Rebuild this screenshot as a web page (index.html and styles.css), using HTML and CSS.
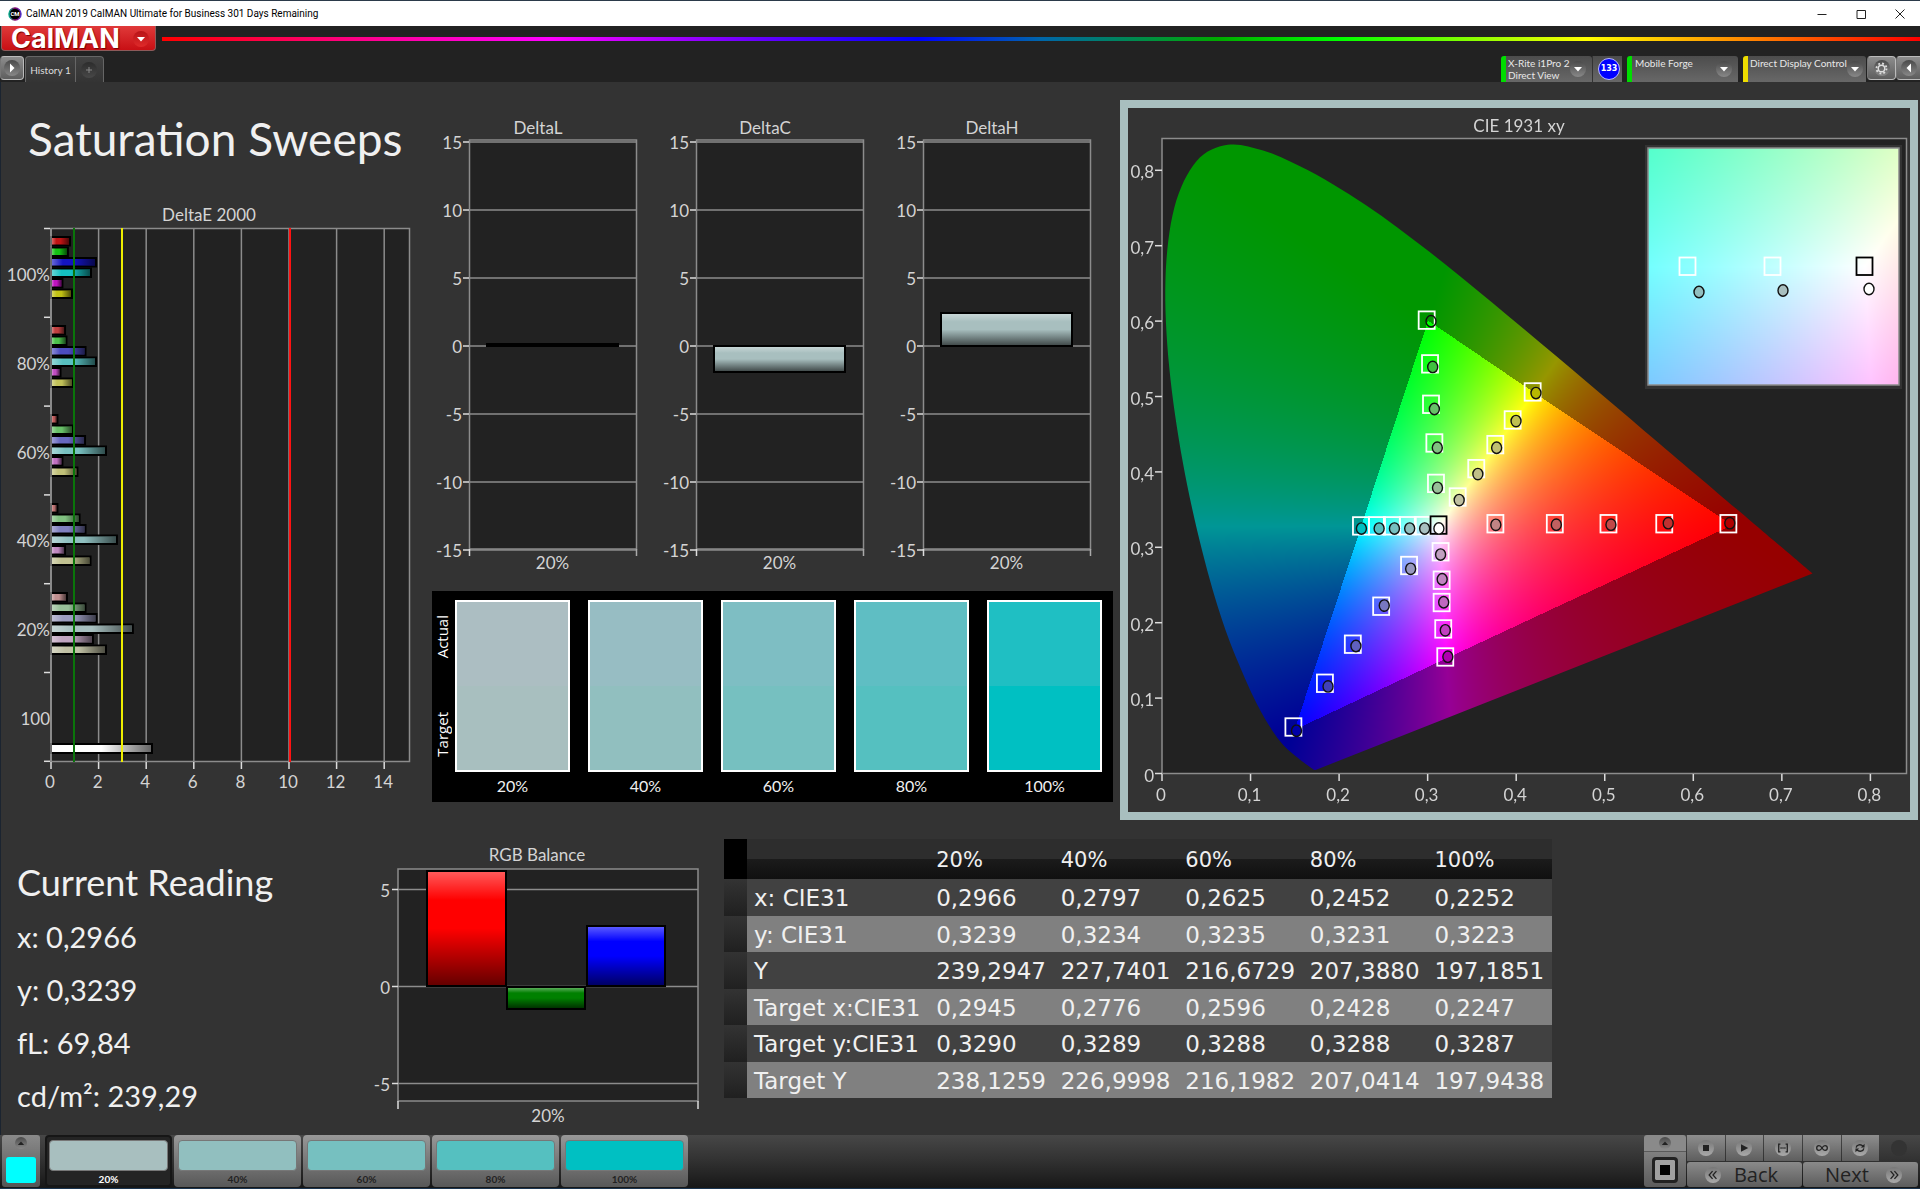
FILE: index.html
```html
<!DOCTYPE html>
<html lang="en">
<head>
<meta charset="utf-8">
<title>CalMAN 2019</title>
<link rel="stylesheet" href="styles.css">
</head>
<body>
<header class="titlebar">
	<svg class="app-icon" viewBox="0 0 14 14"><defs><linearGradient id="ring"><stop offset="0" stop-color="#0a8"/><stop offset="0.5" stop-color="#806"/><stop offset="1" stop-color="#53c"/></linearGradient></defs><circle cx="7" cy="7" r="6" stroke="url(#ring)" stroke-width="1.5"/><text x="7" y="9" text-anchor="middle">CM</text></svg>
	<span class="caption">CalMAN 2019 CalMAN Ultimate for Business 301 Days Remaining</span>
	<button class="win" aria-label="Minimize"><svg viewBox="0 0 12 12"><path d="M1.5 6.5h9"/></svg></button>
	<button class="win" aria-label="Maximize"><svg viewBox="0 0 12 12"><path d="M2 2.500h8.500v8H2z"/></svg></button>
	<button class="win" aria-label="Close"><svg viewBox="0 0 12 12"><path d="M1.500 1.500l9 9M10.500 1.500l-9 9"/></svg></button>
</header>

<div class="brandbar">
	<button class="brand">CalMAN <span class="knob red"><svg viewBox="0 0 10 10"><path d="M1 3h8L5 7.500z"/></svg></span></button>
	<div class="rainbow"></div>
</div>

<nav class="tabbar">
	<button class="square" aria-label="Expand"><span class="knob"><svg viewBox="0 0 10 10"><path d="M3 0.500v9L7.500 5z"/></svg></span></button>
	<div class="tabs">
		<button class="tab">History 1</button>
		<button class="tab add" aria-label="Add tab"><span class="knob dim"><svg viewBox="0 0 10 10"><path d="M4.500 2h1v2.500H8v1H5.500V8h-1V5.500H2v-1h2.500z"/></svg></span></button>
	</div>
	<button class="device meter"><span class="name">X-Rite i1Pro 2<br>Direct View</span><span class="knob"><svg viewBox="0 0 10 10"><path d="M1 3h8L5 7.500z"/></svg></span></button>
	<button class="count"><span>133</span></button>
	<button class="device source"><span class="name">Mobile Forge</span><span class="knob"><svg viewBox="0 0 10 10"><path d="M1 3h8L5 7.500z"/></svg></span></button>
	<button class="device display"><span class="name">Direct Display Control</span><span class="knob"><svg viewBox="0 0 10 10"><path d="M1 3h8L5 7.500z"/></svg></span></button>
	<button class="square gear" aria-label="Settings"><span class="knob"><svg viewBox="0 0 14 14"><circle class="line" cx="7" cy="7" r="3.500"/><circle class="teeth" cx="7" cy="7" r="5.400"/></svg></span></button>
	<button class="square last" aria-label="Collapse"><span class="knob"><svg viewBox="0 0 10 10"><path d="M7 0.500v9L2.500 5z"/></svg></span></button>
</nav>

<main>
	<section class="upper">
		<div class="sweeps">
			<h1>Saturation Sweeps</h1>
			<svg id="deltaE" class="chart" viewBox="0 0 432 600"></svg>
		</div>
		<div class="middle">
			<div class="deltas">
				<svg id="deltaL" class="chart" viewBox="0 0 227 470"></svg>
				<svg id="deltaC" class="chart" viewBox="0 0 227 470"></svg>
				<svg id="deltaH" class="chart" viewBox="0 0 227 470"></svg>
			</div>
			<div class="patches">
				<div class="side"><span>Actual</span><span>Target</span></div>
				<figure><div class="patch p20"></div><figcaption>20%</figcaption></figure>
				<figure><div class="patch p40"></div><figcaption>40%</figcaption></figure>
				<figure><div class="patch p60"></div><figcaption>60%</figcaption></figure>
				<figure><div class="patch p80"></div><figcaption>80%</figcaption></figure>
				<figure><div class="patch p100"></div><figcaption>100%</figcaption></figure>
			</div>
		</div>
		<div class="cie-wrap">
			<div class="cie">
				<canvas id="gamut" width="782" height="704"></canvas>
				<svg id="cie" class="chart" viewBox="0 0 782 704"></svg>
			</div>
		</div>
	</section>

	<section class="lower">
		<div class="reading">
			<h2>Current Reading</h2>
			<p>x: 0,2966</p>
			<p>y: 0,3239</p>
			<p>fL: 69,84</p>
			<p>cd/m²: 239,29</p>
		</div>
		<svg id="rgb" class="chart" viewBox="0 0 364 290"></svg>
		<table>
			<thead>
				<tr><th class="sel"></th><th></th><th>20%</th><th>40%</th><th>60%</th><th>80%</th><th>100%</th></tr>
			</thead>
			<tbody>
				<tr><td class="sel"></td><td>x: CIE31</td><td>0,2966</td><td>0,2797</td><td>0,2625</td><td>0,2452</td><td>0,2252</td></tr>
				<tr><td class="sel"></td><td>y: CIE31</td><td>0,3239</td><td>0,3234</td><td>0,3235</td><td>0,3231</td><td>0,3223</td></tr>
				<tr><td class="sel"></td><td>Y</td><td>239,2947</td><td>227,7401</td><td>216,6729</td><td>207,3880</td><td>197,1851</td></tr>
				<tr><td class="sel"></td><td>Target x:CIE31</td><td>0,2945</td><td>0,2776</td><td>0,2596</td><td>0,2428</td><td>0,2247</td></tr>
				<tr><td class="sel"></td><td>Target y:CIE31</td><td>0,3290</td><td>0,3289</td><td>0,3288</td><td>0,3288</td><td>0,3287</td></tr>
				<tr><td class="sel"></td><td>Target Y</td><td>238,1259</td><td>226,9998</td><td>216,1982</td><td>207,0414</td><td>197,9438</td></tr>
			</tbody>
		</table>
	</section>
</main>

<footer>
	<button class="current" aria-label="Current colour"><span class="knob tiny"><svg viewBox="0 0 10 10"><path d="M1 7.500h8L5 3z"/></svg></span><span class="cyan"></span></button>
	<div class="levels">
		<button class="level active"><span class="p20"></span>20%</button>
		<button class="level"><span class="p40"></span>40%</button>
		<button class="level"><span class="p60"></span>60%</button>
		<button class="level"><span class="p80"></span>80%</button>
		<button class="level"><span class="p100"></span>100%</button>
	</div>
	<button class="pattern" aria-label="Pattern window"><span class="knob tiny"><svg viewBox="0 0 10 10"><path d="M1 7.500h8L5 3z"/></svg></span><span class="window"></span></button>
	<div class="controls">
		<div class="transport">
			<button aria-label="Stop"><span class="knob"><svg viewBox="0 0 14 14"><path d="M3.500 3.500h7v7h-7z"/></svg></span></button>
			<button aria-label="Play"><span class="knob"><svg viewBox="0 0 14 14"><path d="M3.500 2.500v9L12 7z"/></svg></span></button>
			<button aria-label="Read range"><span class="knob"><svg viewBox="0 0 14 14"><path class="line" d="M4 2.500H2v9h2M10 2.500h2v9h-2M4 7h1.500M6.300 7h1.400M8.500 7H10"/></svg></span></button>
			<button aria-label="Continuous"><span class="knob"><svg viewBox="0 0 14 14"><path class="line" d="M7 7C5.500 4.500 4.500 4.300 3.500 4.300a2.700 2.700 0 0 0 0 5.400C4.500 9.700 5.500 9.500 7 7s2.500-2.700 3.500-2.700a2.700 2.700 0 0 1 0 5.400C9.500 9.700 8.500 9.500 7 7z"/></svg></span></button>
			<button aria-label="Repeat"><span class="knob"><svg viewBox="0 0 14 14"><path class="line" d="M2.500 6.500C3 3 8 2 10.500 5M11.500 7.500C11 11 6 12 3.500 9"/><path d="M12.300 2v4.300H8zM1.700 12V7.700H6z"/></svg></span></button>
			<button class="off" aria-label="Record"><span class="knob dim"></span></button>
		</div>
		<div class="steps">
			<button><span class="knob"><svg viewBox="0 0 14 14"><path class="line" d="M6.500 2.500L2.500 7l4 4.500M11 2.500L7 7l4 4.500"/></svg></span>Back</button>
			<button class="next">Next<span class="knob"><svg viewBox="0 0 14 14"><path class="line" d="M3 2.500L7 7l-4 4.500M7.500 2.500l4 4.500-4 4.500"/></svg></span></button>
		</div>
	</div>
</footer>
<script src="charts.js"></script>
</body>
</html>
```

FILE: styles.css
```css
*{box-sizing:border-box;}
body{margin:0;min-height:100vh;display:flex;flex-direction:column;background:#333;color:#f0f0f0;font-family:Lato,"Open Sans",sans-serif;}
button{border:0;padding:0;margin:0;background:none;color:inherit;font:inherit;}
h1,h2,p,figure{margin:0;font-weight:normal;}
svg,canvas{display:block;}

/* title bar */
.titlebar{display:flex;align-items:center;height:26px;background:#fff;border-top:1px solid #2b3a4a;padding:0 1px 0 8px;color:#000;font-family:Roboto,sans-serif;font-size:10px;line-height:24px;}
.app-icon{width:14px;height:14px;margin-right:4px;}
.app-icon text{font-size:6px;font-weight:bold;fill:#fff;}
.caption{flex:1;}
.win{width:39px;height:24px;display:flex;align-items:center;justify-content:center;}
.win svg{width:12px;height:12px;fill:none;stroke:#222;}

.brandbar{display:flex;height:30px;background:#222;padding-left:1px;gap:6px;}
.brand{display:flex;align-items:center;justify-content:space-between;width:155px;height:25px;padding:1px 6px 0 9px;background:linear-gradient(#e03a3a,#c80f14);border:1px solid #8d5a5a;border-top:0;border-radius:0 0 4px 4px;color:#fff;font:bold 27px/24px Inter,sans-serif;text-shadow:1px 1px 1px #700;}
.rainbow{flex:1;height:4px;margin-top:11px;background:linear-gradient(90deg,#f00,#f0a 14%,#f0f 22%,#60f 34%,#00f 43%,#06a 50%,#0a0 60%,#0f0 67%,#ff0 81%,#f80 90%,#f00);}

.knob{display:flex;align-items:center;justify-content:center;flex:none;width:16px;height:16px;border-radius:50%;background:linear-gradient(#4a4a4a,#888);}
.knob svg{width:10px;height:10px;fill:#fff;}
.knob.red{background:linear-gradient(#b81418,#e02a2a);}
.knob.dim{background:linear-gradient(#2c2c2c,#484848);}
.knob.dim svg{fill:#888;}

/* tabs and devices */
.tabbar{display:flex;height:26px;background:#222;color:#e8e8e8;}
.square{display:flex;align-items:center;justify-content:center;width:24px;height:24px;background:linear-gradient(#8d8d8d,#5e5e5e);border:1px solid #bbb;border-left-color:#777;border-radius:4px;}
.tabs{display:flex;flex:1;margin-left:1px;}
.tab{height:26px;width:51px;background:linear-gradient(#424242,#343434);border:1px solid #666;border-bottom:0;border-radius:4px 0 0 0;font-size:10px;color:#ddd;}
.tab.add{width:28px;border-left:0;border-radius:0 4px 0 0;padding-left:5px;}
.device{display:flex;align-items:center;justify-content:space-between;height:26px;padding:0 5px;background:linear-gradient(#4c4c4c,#686868);border-left:5px solid #0d0;border-radius:3px 3px 0 0;text-align:left;line-height:12px;font-size:10px;}
.name{align-self:flex-start;padding-top:1px;white-space:nowrap;}
.meter{width:91px;padding:0 11px 0 2px;}
.count{width:30px;margin-right:5px;padding-left:3px;background:linear-gradient(#4c4c4c,#686868);border-left:1px solid #333;}
.count span{display:block;width:22px;height:22px;margin:0 auto;border-radius:50%;background:#00f;border:1px solid #bbf;font:bold 8px/20px "DejaVu Sans",sans-serif;color:#fff;}
.source{width:111px;margin-right:5px;padding:0 6px 0 3px;}
.display{width:123px;padding:0 8px 0 2px;margin-right:1px;border-left-color:#ed0;}
.gear{width:29px;}
.gear .knob svg{width:13px;height:13px;}
.gear circle{fill:none;stroke:#ddd;stroke-width:1.500;}
.gear .teeth{stroke-dasharray:2 2.240;stroke-width:2;}
.last{border-right:0;border-radius:4px 0 0 4px;}

/* workspace */
main{flex:1;border-left:1px solid #1b2430;}
.upper{display:grid;grid-template-columns:minmax(0,432fr) minmax(0,681fr) minmax(0,807fr);align-items:start;margin-left:-1px;}
.chart{width:100%;height:auto;}
.chart text{fill:#d4d4d4;font-size:17px;}
h1{font-size:46px;line-height:58px;height:118px;padding:28px 0 0 28px;white-space:nowrap;}
.deltas{display:grid;grid-template-columns:repeat(3,1fr);padding-top:28px;}
.patches{display:flex;margin-top:11px;padding:9px 11px 5px 3px;background:#000;}
.side{display:flex;flex-direction:column;justify-content:space-between;width:20px;height:172px;padding:15px 0 15px;font:15px/14px "Open Sans",sans-serif;color:#fff;}
.side span{writing-mode:vertical-rl;transform:rotate(180deg);}
figure{flex:1;text-align:center;font-size:16px;line-height:22px;}
figure + figure{margin-left:18px;}
.patch{height:172px;margin-bottom:3px;border:2px solid #fff;}
.p20{background:linear-gradient(#acbec2 50%,#a8bfbf 50%);}
.p40{background:linear-gradient(#97bdc3 50%,#91bfbf 50%);}
.p60{background:linear-gradient(#7ebec3 50%,#76c0c0 50%);}
.p80{background:linear-gradient(#5fbec3 50%,#55c0c0 50%);}
.p100{background:linear-gradient(#1fbfc3 50%,#00c0c2 50%);}
.cie-wrap{padding:18px 2px 0 7px;}
.cie{display:grid;border:8px solid #a8bfbf;}
.cie > *{grid-area:1 / 1;width:100%;}

.lower{display:grid;grid-template-columns:360fr 364fr 828fr 368fr;align-items:start;margin-left:-1px;padding-top:19px;}
.reading{padding:15px 0 0 17px;}
h2{font-size:36px;line-height:56px;}
.reading p{font-size:29px;line-height:53px;}
table{width:100%;height:259px;border-collapse:collapse;table-layout:fixed;font-family:"DejaVu Sans",sans-serif;font-size:23px;line-height:24px;}
th,td{padding:2px 0 0 7px;font-weight:normal;text-align:left;white-space:nowrap;}
th:nth-child(2){width:22%;}
th{height:40px;font-size:21px;background:linear-gradient(#2d2d2d 50%,#1b1b1b 50%,#101010);}
td{background:#414141;}
tbody tr:nth-child(even) td{background:#808080;}
th.sel{width:23px;background:#000;}
tbody tr td.sel,tbody tr:nth-child(even) td.sel{background:linear-gradient(#333,#202020);}

/* bottom bar */
footer{display:flex;height:54px;padding:0 2px 1px 2px;background:linear-gradient(#474747,#333 45%,#171717);border-bottom:1px solid #1b3550;}
.current{width:38px;margin-right:5px;padding:0 4px 4px;display:flex;flex-direction:column;align-items:center;justify-content:space-between;background:linear-gradient(#8a8a8a,#555);border-radius:3px;}
.cyan{width:30px;height:26px;border-radius:3px;background:#0ff;}
.knob.tiny{width:12px;height:12px;margin-top:2px;}
.knob.tiny svg{width:8px;height:8px;fill:#222;}
.levels{display:flex;gap:2px;flex:1;}
.level{width:127px;padding:5px 4px 0;background:linear-gradient(#989898,#585858);border-radius:4px;color:#222;font-size:10px;line-height:16px;font-weight:bold;}
.level span{display:block;height:31px;border:1px solid #777;border-radius:4px;}
.level .p20{background:#a8bfbf;}
.level .p40{background:#91bfbf;}
.level .p60{background:#76c0c0;}
.level .p80{background:#55c0c0;}
.level .p100{background:#00c0c2;}
.level.active{background:#242424;color:#fff;border:2px solid #161616;padding:3px 2px 0;}
.pattern{width:42px;display:flex;flex-direction:column;align-items:center;justify-content:space-between;padding-bottom:4px;background:linear-gradient(#8a8a8a 16px,#333 16px,#808080 17px,#5c5c5c);border-radius:3px;}
.window{width:26px;height:26px;background:#000;border:3px solid #222;border-radius:4px;box-shadow:inset 0 0 0 5px #a0a0a0;}
.controls{width:231px;margin-left:1px;}
.transport{display:grid;grid-template-columns:repeat(6,1fr);gap:1px;margin-bottom:1px;}
.transport button{display:flex;align-items:center;justify-content:center;height:26px;background:linear-gradient(#8e8e8e,#5e5e5e);}
.transport .off{background:none;}
.controls .knob{background:linear-gradient(#777,#aaa);}
.controls .knob svg{width:12px;height:12px;fill:#222;}
.controls .line{fill:none;stroke:#222;stroke-width:1.500;}
.controls .knob.dim{background:#333;}
.steps{display:grid;grid-template-columns:1fr 1fr;gap:1px;}
.steps button{display:flex;align-items:center;justify-content:space-between;height:25px;padding:0 24px 0 18px;background:linear-gradient(#8a8a8a,#5c5c5c);border-radius:3px;color:#222;font:20px/24px "Open Sans",sans-serif;}
.steps .next{padding:0 16px 0 22px;}
```

FILE: charts.js
```js
var NS = "http://www.w3.org/2000/svg";
var GRID = "#8c8c8c";

function add(svg, tag, attrs, text)
{
	var el = document.createElementNS(NS, tag);
	for(var k in attrs)
	{
		el.setAttribute(k, attrs[k]);
	}
	if(text !== undefined)
	{
		el.textContent = text;
	}
	svg.appendChild(el);
	return el;
}
function line(svg, x1, y1, x2, y2, color, w)
{
	add(svg, "line", {x1:x1, y1:y1, x2:x2, y2:y2, stroke:color, "stroke-width":w || 1.5});
}
function label(svg, x, y, text, anchor)
{
	add(svg, "text", {x:x, y:y, "text-anchor":anchor || "middle"}, text);
}
function frame(svg, x, y, w, h, fill)
{
	add(svg, "rect", {x:x, y:y, width:w, height:h, fill:fill, stroke:GRID, "stroke-width":1.5});
}
// glossy bar: light edge, flat colour, dark far edge
function bar(svg, x, y, w, h, color, across)
{
	var id = svg.id + "-g" + svg.childNodes.length;
	var g = add(svg, "linearGradient", {id:id, x1:0, y1:0, x2:across ? 1 : 0, y2:across ? 0 : 1});
	add(g, "stop", {offset:0, "stop-color":"#fff", "stop-opacity":0.35});
	add(g, "stop", {offset:0.25, "stop-color":"#fff", "stop-opacity":0});
	add(g, "stop", {offset:0.5, "stop-color":"#000", "stop-opacity":0});
	add(g, "stop", {offset:1, "stop-color":"#000", "stop-opacity":0.6});
	add(svg, "rect", {x:x, y:y, width:w, height:h, fill:color, stroke:"#000", "stroke-width":2});
	add(svg, "rect", {x:x + 1, y:y + 1, width:Math.max(w - 2, 0), height:Math.max(h - 2, 0), fill:"url(#" + id + ")"});
}

function drawDeltaE()
{
	var svg = document.getElementById("deltaE");
	var names = ["100%", "80%", "60%", "40%", "20%", "100"];
	var colors = [
		["#c01414", "#14c014", "#1414c0", "#14c0c0", "#c014c0", "#c0c014"],
		["#c04040", "#4cc04c", "#4c4cc0", "#58c0c0", "#c04cc0", "#c0c058"],
		["#c05c5c", "#68c068", "#6868c0", "#78c0c0", "#c070c0", "#c0c078"],
		["#c07474", "#80c080", "#8080c0", "#90c0c0", "#c088c0", "#c0c090"],
		["#c09090", "#98c098", "#9c9cc0", "#a8c0c0", "#c0a4c0", "#c0c0a4"]
	];
	var values = [
		[0.8, 0.71, 1.89, 1.68, 0.48, 0.88],
		[0.59, 0.65, 1.45, 1.89, 0.4, 0.92],
		[0.27, 0.92, 1.43, 2.31, 0.48, 1.11],
		[0.27, 1.2, 1.45, 2.77, 0.59, 1.66],
		[0.67, 1.45, 1.91, 3.44, 1.76, 2.31]
	];
	frame(svg, 51, 28.5, 358.5, 533, "#222");
	label(svg, 209, 21, "DeltaE 2000");
	for(var v = 0; v <= 14; v += 2)
	{
		var x = 51 + v * 23.8;
		line(svg, x, 28.5, x, 561.5, GRID);
		line(svg, x, 562, x, 569, "#ddd");
		label(svg, x - 1, 588, v);
	}
	for(var i = 0; i <= 6; i++)
	{
		line(svg, 44, 28.5 + i * 88.8, 50, 28.5 + i * 88.8, "#ddd");
		if(i < 6)
		{
			label(svg, 50, 81 + i * 88.8, names[i], "end");
		}
	}
	for(var r = 0; r < values.length; r++)
	{
		for(var c = 0; c < 6; c++)
		{
			bar(svg, 51, 37 + r * 89 + c * 10.5, values[r][c] * 23.8, 8.5, colors[r][c], true);
		}
	}
	bar(svg, 51, 544, 101, 9, "#fff", true);
	line(svg, 51, 28, 51, 562, GRID);
	line(svg, 74, 28, 74, 562, "#0a750a", 2);
	line(svg, 122, 28, 122, 562, "#ee0", 2);
	line(svg, 290, 28, 290, 562, "#f11", 2);
}

function drawDelta(id, title, from, to)
{
	var svg = document.getElementById(id);
	frame(svg, 37.5, 30, 167, 409, "#222");
	label(svg, 106, 24, title);
	for(var v = 15; v >= -15; v -= 5)
	{
		var y = 236 - v * 13.6;
		line(svg, 37.5, y, 204.5, y, GRID);
		line(svg, 31, y, 37, y, "#ddd");
		label(svg, 30, y + 7, v, "end");
	}
	line(svg, 37.500, 439, 37.500, 446, "#ddd");
	line(svg, 204.500, 439, 204.500, 446, "#aaa");
	bar(svg, 55, from, 131, to - from, "#a8bfbf");
	label(svg, 120.500, 459, "20%");
}

function drawRGB()
{
	var svg = document.getElementById("rgb");
	frame(svg, 38, 30, 300, 232, "#222");
	label(svg, 177, 22, "RGB Balance");
	for(var v = 5; v >= -5; v -= 5)
	{
		var y = 147.500 - v * 19.400;
		line(svg, 38, y, 338, y, GRID);
		line(svg, 32, y, 38, y, "#ddd");
		label(svg, 30, y + 7, v, "end");
	}
	line(svg, 38, 262, 38, 270, "#ddd");
	line(svg, 338, 262, 338, 270, "#ddd");
	bar(svg, 67, 32, 79, 115, "#f00");
	bar(svg, 147, 148, 78, 22, "#008000");
	bar(svg, 227, 87, 78, 60, "#00f");
	label(svg, 188, 283, "20%");
}

/* CIE 1931 xy */
var locus = [[.1741,.005],[.1714,.0051],[.1644,.0109],[.1566,.0177],[.144,.0297],[.1355,.0399],[.1241,.0578],[.1096,.0868],[.0913,.1327],[.0687,.2007],[.0454,.295],[.0235,.4127],[.0082,.5384],[.0039,.6548],[.0139,.7502],[.0389,.812],[.0743,.8338],[.1142,.8262],[.1547,.8059],[.1929,.7816],[.2296,.7543],[.2658,.7243],[.3016,.6923],[.3373,.6589],[.3731,.6245],[.4087,.5896],[.4441,.5547],[.4788,.5202],[.5125,.4866],[.5448,.4544],[.5752,.4242],[.6029,.3965],[.627,.3725],[.6482,.3514],[.6658,.334],[.6915,.3083],[.7079,.292],[.719,.2809],[.726,.274],[.7347,.2653]];

function px(x){ return 34 + x * 885.5; }
function py(y){ return 665.5 - y * 754; }

function xyColor(x, y)
{
	var X = x / y, Z = (1 - x - y) / y;
	var c = [
		3.2406 * X - 1.5372 - 0.4986 * Z,
		-0.9689 * X + 1.8758 + 0.0415 * Z,
		0.0557 * X - 0.2040 + 1.0570 * Z
	];
	var max = Math.max(c[0], c[1], c[2]);
	var k = Math.min(c[0], c[1], c[2]) < -0.002 * max ? 150 : 255;
	for(var i = 0; i < 3; i++)
	{
		c[i] = k * Math.max(c[i], 0) / max;
	}
	return c;
}
function colorField(w, h, toX, toY)
{
	var cv = document.createElement("canvas");
	cv.width = w;
	cv.height = h;
	var ctx = cv.getContext("2d");
	var img = ctx.createImageData(w, h);
	for(var j = 0; j < h; j++)
	{
		for(var i = 0; i < w; i++)
		{
			var c = xyColor(toX(i), Math.max(toY(j), 0.001));
			var p = (j * w + i) * 4;
			img.data[p] = c[0];
			img.data[p + 1] = c[1];
			img.data[p + 2] = c[2];
			img.data[p + 3] = 255;
		}
	}
	ctx.putImageData(img, 0, 0);
	return cv;
}
function drawGamut()
{
	var ctx = document.getElementById("gamut").getContext("2d");
	ctx.fillStyle = "#333";
	ctx.fillRect(0, 0, 782, 704);
	ctx.fillStyle = "#222";
	ctx.fillRect(34, 30, 745, 635);
	ctx.save();
	ctx.beginPath();
	ctx.moveTo(px(locus[0][0]), py(locus[0][1]));
	// smooth curve through every locus point
	for(var i = 0; i < locus.length - 1; i++)
	{
		var p = locus[Math.max(i - 1, 0)], a = locus[i], b = locus[i + 1], n = locus[Math.min(i + 2, locus.length - 1)];
		ctx.bezierCurveTo(
			px(a[0] + (b[0] - p[0]) / 6), py(a[1] + (b[1] - p[1]) / 6),
			px(b[0] - (n[0] - a[0]) / 6), py(b[1] - (n[1] - a[1]) / 6),
			px(b[0]), py(b[1]));
	}
	ctx.closePath();
	ctx.clip();
	ctx.drawImage(colorField(782, 704, function(i){ return (i - 34) / 885.5; }, function(j){ return (665.5 - j) / 754; }), 0, 0);
	ctx.restore();
	// zoomed inset around the white point
	ctx.fillStyle = "#333";
	ctx.fillRect(517, 37, 257, 244);
	ctx.drawImage(colorField(251, 237, function(i){ return .2698 + i / 5043; }, function(j){ return .3565 - j / 4285; }), 520, 40);
}

function square(svg, x, y, color)
{
	add(svg, "rect", {x:x - 8, y:y - 8.5, width:16, height:17.5, fill:"none", stroke:color, "stroke-width":1.8});
}
function dot(svg, x, y, fill)
{
	add(svg, "ellipse", {cx:x, cy:y, rx:5, ry:5.7, fill:fill, stroke:"#111", "stroke-width":1.4});
}
function drawCIE()
{
	var svg = document.getElementById("cie");
	var targets = [
		[.3765,.3316],[.4436,.3316],[.5042,.3316],[.5672,.3316],[.6396,.3316],
		[.3094,.3851],[.3076,.4387],[.3038,.49],[.3027,.5436],[.2989,.6016],
		[.279,.2762],[.2475,.2222],[.2155,.1718],[.184,.12],[.1484,.062],
		[.2945,.329],[.2776,.3289],[.2596,.3288],[.2428,.3288],[.2247,.3287],
		[.3146,.2944],[.3158,.2567],[.3158,.2271],[.3176,.1921],[.3199,.1549],
		[.3339,.367],[.3549,.4046],[.3764,.4365],[.396,.4692],[.4186,.5064]
	];
	var actual = [
		[.377,.3298,"#c08484"],[.4453,.33,"#c06060"],[.507,.33,"#c04848"],[.5717,.332,"#c03030"],[.6412,.332,"#b00000"],
		[.3111,.3789,"#98c098"],[.3109,.432,"#80c080"],[.3076,.4834,"#68c068"],[.3057,.5392,"#40c040"],[.3038,.5998,"none"],
		[.2808,.2714,"#9898c0"],[.251,.2227,"#7878c0"],[.219,.1691,"#6060c0"],[.1875,.1155,"#4040b8"],[.1519,.0567,"#0000a8"],
		[.2966,.3249,"#a8bfbf"],[.2797,.3249,"#91bfbf"],[.2625,.3249,"#76c0c0"],[.2452,.3249,"#55c0c0"],[.2252,.3249,"#00c0c2"],
		[.3146,.2904,"#c0a0c0"],[.3164,.2576,"#c084c0"],[.3181,.2271,"#c068c0"],[.3199,.1899,"#c040c0"],[.3228,.1549,"#b000b0"],
		[.3356,.3626,"#c0c0a0"],[.3567,.3971,"#c0c088"],[.3779,.432,"#c0c070"],[.3998,.4674,"#c0c050"],[.4223,.5046,"#b8b800"]
	];
	var i;
	frame(svg, 34, 30.5, 744.5, 635, "none");
	label(svg, 391, 24, "CIE 1931 xy");
	for(i = 0; i <= 8; i++)
	{
		var t = i == 0 ? "0" : "0," + i;
		line(svg, px(i / 10), 666, px(i / 10), 673, "#ddd");
		line(svg, 27, py(i / 10), 34, py(i / 10), "#ddd");
		label(svg, px(i / 10) - 1, 693, t);
		label(svg, 26, py(i / 10) + 8, t, "end");
	}
	for(i = 0; i < targets.length; i++)
	{
		square(svg, px(targets[i][0]), py(targets[i][1]), "#fff");
	}
	square(svg, px(.3123), py(.3298), "#000");
	dot(svg, px(.3127), py(.325), "#fff");
	for(i = 0; i < actual.length; i++)
	{
		dot(svg, px(actual[i][0]), py(actual[i][1]), actual[i][2]);
	}
	frame(svg, 520, 40, 251, 237, "none");
	square(svg, 559.500, 158, "#fff");
	square(svg, 644.500, 158, "#fff");
	square(svg, 736.500, 158, "#000");
	dot(svg, 571, 184, "#91bfbf");
	dot(svg, 655, 182.500, "#a8bfbf");
	dot(svg, 741, 181, "#fff");
}

drawDeltaE();
drawDelta("deltaL", "DeltaL", 234, 236);
drawDelta("deltaC", "DeltaC", 236, 262);
drawDelta("deltaH", "DeltaH", 203, 236);
drawRGB();
drawGamut();
drawCIE();
```
